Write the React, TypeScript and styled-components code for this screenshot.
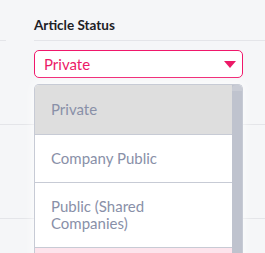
import React from "react";
import styled, { createGlobalStyle } from "styled-components";

const Global = createGlobalStyle`
  html, body { margin: 0; padding: 0; }
  body {
    background: #f5f6f8;
    font-family: Lato, "Open Sans", sans-serif;
    overflow: hidden;
  }
`;

const Page = styled.div`
  position: relative;
  width: 265px;
  height: 253px;
  overflow: hidden;
`;

const Header = styled.div`
  display: flex;
  align-items: flex-start;
`;

const Stub = styled.div`
  width: 6px;
  height: 41px;
  border-bottom: 1px solid #e4e5e9;
  box-sizing: border-box;
  flex: none;
`;

const Field = styled.div`
  position: relative;
  margin-left: 28px;
  flex: 1;
  z-index: 2;
`;

const Label = styled.div`
  height: 41px;
  box-sizing: border-box;
  padding-top: 17px;
  font-size: 13.5px;
  font-weight: 700;
  color: #1e2126;
  border-bottom: 1px solid #e4e5e9;
  line-height: 16px;
`;

const Select = styled.div`
  margin-top: 9px;
  width: 209px;
  height: 28px;
  box-sizing: border-box;
  border: 1px solid #f0176b;
  border-radius: 5px;
  background: #fff;
  display: flex;
  align-items: center;
  justify-content: space-between;
  padding: 0 6px 0 9px;
  color: #ec1a67;
  font-size: 15px;
`;

const Caret = styled.svg`
  width: 12px;
  height: 7px;
  display: block;
`;

const Menu = styled.div`
  position: absolute;
  top: calc(100% + 6px);
  left: 0;
  width: 209px;
  height: 200px;
  box-sizing: border-box;
  border: 1px solid #c7cbd5;
  border-bottom: none;
  border-radius: 5px 5px 0 0;
  background: #fff;
  box-shadow: 0 0 12px rgba(255, 255, 255, 0.9);
  display: flex;
  overflow: hidden;
`;

const List = styled.div`
  flex: 1;
  display: flex;
  flex-direction: column;
`;

const Item = styled.div<{ $bg: string; $h: number }>`
  height: ${(p) => p.$h}px;
  flex: none;
  box-sizing: border-box;
  background: ${(p) => p.$bg};
  border-bottom: 1px solid #c7cbd5;
  padding: 0 16px;
  display: flex;
  align-items: center;
  color: #8990a8;
  font-size: 15px;
  line-height: 17px;
`;

const Scroll = styled.div`
  width: 10px;
  flex: none;
  background: #bfc3ce;
  border-top-right-radius: 4px;
  position: relative;
  &::before {
    content: "";
    position: absolute;
    top: 0;
    left: 0;
    right: 0;
    height: 6px;
    border-radius: 4px 4px 0 0;
    background: #c9ccd5;
  }
`;

const Rows = styled.div`
  display: flex;
  flex-direction: column;
`;

const Row = styled.div<{ $h: number }>`
  height: ${(p) => p.$h}px;
  box-sizing: border-box;
  border-bottom: 1px solid #e4e5e9;
`;

export default function App() {
  return (
    <Page>
      <Global />
      <Header>
        <Stub />
        <Field>
          <Label>Article Status</Label>
          <Select>
            <span>Private</span>
            <Caret viewBox="0 0 12 7">
              <path d="M0 0 L12 0 L6 7 Z" fill="#ec1a67" />
            </Caret>
          </Select>
          <Menu>
            <List>
              <Item $bg="#dedede" $h={50}>Private</Item>
              <Item $bg="#ffffff" $h={48}>Company Public</Item>
              <Item $bg="#ffffff" $h={65}>
                Public (Shared
                <br />
                Companies)
              </Item>
              <Item $bg="#fde4ec" $h={40} />
            </List>
            <Scroll />
          </Menu>
        </Field>
      </Header>
      <Rows>
        <Row $h={47} />
        <Row $h={94} />
        <Row $h={60} />
      </Rows>
    </Page>
  );
}
